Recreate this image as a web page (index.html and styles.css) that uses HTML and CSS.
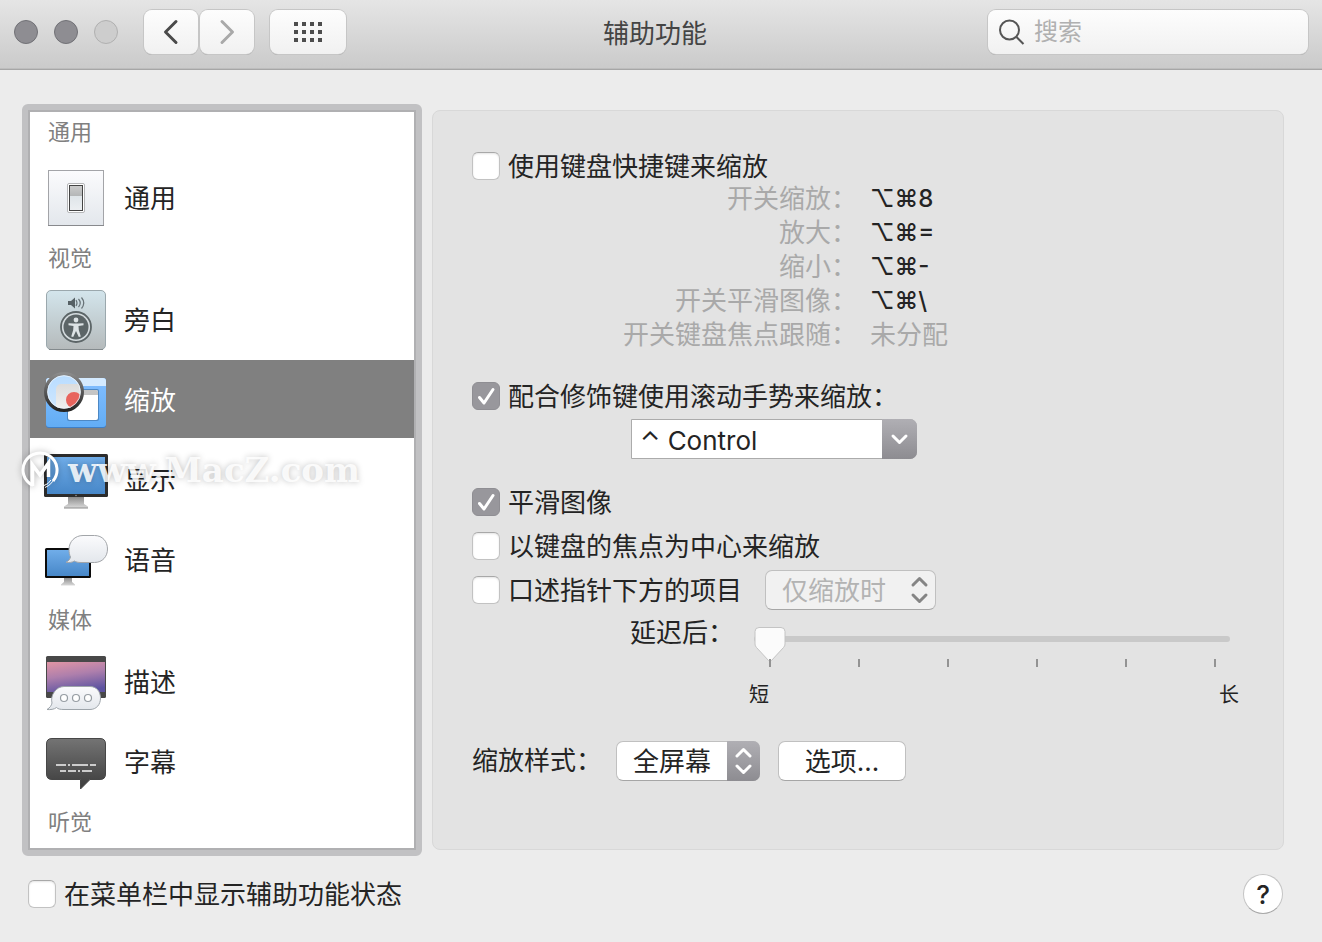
FILE: index.html
```html
<!DOCTYPE html>
<html lang="zh-CN">
<head>
  <meta charset="UTF-8">
  <meta name="viewport" content="width=device-width, initial-scale=1.0">
  <title>辅助功能</title>
  <link rel="stylesheet" href="styles.css">
</head>
<body>
  <header class="toolbar">
    <div class="window-buttons">
      <button class="light" aria-label="关闭"></button>
      <button class="light" aria-label="最小化"></button>
      <button class="light light-off" aria-label="缩放窗口" disabled></button>
    </div>
    <div class="nav-buttons">
      <button class="tool-button" aria-label="后退">
        <svg width="54" height="44" viewBox="0 0 54 44"><path d="M32 11.500L21.500 22L32 32.500" fill="none" stroke="#4a4a4a" stroke-width="3" stroke-linecap="round" stroke-linejoin="round"/></svg>
      </button>
      <button class="tool-button" aria-label="前进">
        <svg width="54" height="44" viewBox="0 0 54 44"><path d="M22 11.500L32.500 22L22 32.500" fill="none" stroke="#a9a9a9" stroke-width="3" stroke-linecap="round" stroke-linejoin="round"/></svg>
      </button>
    </div>
    <button class="tool-button grid-button" aria-label="显示全部">
      <svg width="28" height="20" viewBox="0 0 28 20" fill="#4d4d4d">
        <path d="M0 0h4v4H0zM8 0h4v4H8zM16 0h4v4h-4zM24 0h4v4h-4zM0 8h4v4H0zM8 8h4v4H8zM16 8h4v4h-4zM24 8h4v4h-4zM0 16h4v4H0zM8 16h4v4H8zM16 16h4v4h-4zM24 16h4v4h-4z"/>
      </svg>
    </button>
    <h1 class="window-title">辅助功能</h1>
    <div class="search">
      <svg width="26" height="26" viewBox="0 0 26 26" fill="none" stroke="#555" stroke-width="2"><circle cx="10.500" cy="11" r="9.500"/><path d="M17.500 18L24.500 25"/></svg>
      <input type="search" placeholder="搜索" aria-label="搜索">
    </div>
  </header>

  <main class="content">
    <div class="columns">
      <nav class="sidebar">
        <h2 class="group-title first">通用</h2>
        <a class="item" href="#general">
          <svg class="item-icon" viewBox="0 0 64 64">
            <defs>
              <linearGradient id="plate" x2="0" y2="1"><stop offset="0" stop-color="#fbfbfd"/><stop offset="1" stop-color="#e3e7ec"/></linearGradient>
              <linearGradient id="key" x2="0" y2="1"><stop offset="0" stop-color="#ccc"/><stop offset=".42" stop-color="#b4b6b7"/><stop offset=".43" stop-color="#dfe5e9"/><stop offset="1" stop-color="#eceff2"/></linearGradient>
            </defs>
            <rect x="4.500" y="5.500" width="55" height="55" fill="url(#plate)" stroke="#a3a4a8"/>
            <path d="M4 60.500h56" stroke="#88898d"/>
            <rect x="23.500" y="18.500" width="17" height="29" rx="1.500" fill="#fff" stroke="#b5b6b8"/>
            <rect x="25.500" y="20.500" width="13" height="25" fill="url(#key)" stroke="#444"/>
          </svg>
          <span>通用</span>
        </a>

        <h2 class="group-title">视觉</h2>
        <a class="item" href="#voiceover">
          <svg class="item-icon" viewBox="0 0 64 64">
            <defs><linearGradient id="vo" x2="0" y2="1"><stop offset="0" stop-color="#d3e5ec"/><stop offset="1" stop-color="#b5babb"/></linearGradient></defs>
            <rect x="2.500" y="3.500" width="59" height="59" rx="4.500" fill="url(#vo)" stroke="#9ba8ad"/>
            <path d="M5 62.500h54" stroke="#838a8d"/>
            <path d="M24 14h3l4-3.500v11L27 18h-3z" fill="#566064"/>
            <path d="M32 13q2 3 0 6M34.500 12q3.500 4 0 8M37.500 10.500q4.500 5.500 0 11" fill="none" stroke="#667176" stroke-width="1.200"/>
            <circle cx="32" cy="40" r="15" fill="#d5dcdf" stroke="#5c6567" stroke-width="1.800"/>
            <circle cx="32" cy="40" r="12.500" fill="#5c6567"/>
            <circle cx="32" cy="33" r="2.400" fill="#dde3e5"/>
            <path d="M24.500 36.200l5.500.3h4l5.500-.3v2l-5 .8.300 4 2 6.500-2 .5-2.800-6-2.800 6-2-.5 2-6.500.300-4-5-.8z" fill="#dde3e5"/>
          </svg>
          <span>旁白</span>
        </a>
        <a class="item selected" href="#zoom" aria-current="page">
          <svg class="item-icon" viewBox="0 0 64 64">
            <defs>
              <linearGradient id="desk" x2="0" y2="1"><stop offset="0" stop-color="#83beff"/><stop offset="1" stop-color="#62adf5"/></linearGradient>
              <linearGradient id="rim" x2="0" y2="1"><stop offset="0" stop-color="#8a8a8a"/><stop offset="1" stop-color="#252525"/></linearGradient>
              <linearGradient id="glass" x2="0" y2="1"><stop offset="0" stop-color="#b8dcff"/><stop offset="1" stop-color="#cfe7ff"/></linearGradient>
              <linearGradient id="page" x2="0" y2="1"><stop offset="0" stop-color="#dcdcdc"/><stop offset="1" stop-color="#f4f4f4"/></linearGradient>
              <clipPath id="lens"><circle cx="20" cy="25" r="17"/></clipPath>
            </defs>
            <rect x="2" y="11" width="60" height="50" rx="3" fill="#3e7fc7"/>
            <rect x="2" y="11" width="60" height="49" rx="3" fill="url(#desk)"/>
            <path d="M2 19v-5q0-3 3-3h54q3 0 3 3v5z" fill="#d4eaff"/>
            <rect x="23" y="22" width="32" height="32" rx="2" fill="#4d88c4"/>
            <rect x="24" y="23" width="30" height="30" rx="2" fill="#fff"/>
            <path d="M24 28v-3q0-2 2-2h26q2 0 2 2v3z" fill="#c5c5c5"/>
            <g clip-path="url(#lens)">
              <path d="M2 7h36v36H2z" fill="url(#glass)"/>
              <rect x="12" y="17" width="30" height="30" rx="5" fill="url(#page)"/>
              <circle cx="30" cy="33" r="8" fill="#e8645d"/>
            </g>
            <circle cx="20" cy="25" r="18.300" fill="none" stroke="url(#rim)" stroke-width="3.400"/>
            <circle cx="20" cy="25" r="16.400" fill="none" stroke="#eef6ff" stroke-width=".8"/>
          </svg>
          <span>缩放</span>
        </a>
        <a class="item" href="#display">
          <svg class="item-icon" viewBox="0 0 64 64">
            <defs>
              <linearGradient id="screen" x2="0" y2="1"><stop offset="0" stop-color="#70ade9"/><stop offset="1" stop-color="#4787c8"/></linearGradient>
              <linearGradient id="stand" x2="0" y2="1"><stop offset="0" stop-color="#858585"/><stop offset="1" stop-color="#d9d9d9"/></linearGradient>
            </defs>
            <path d="M24 49h16v8l4 2.500v1.500H20v-1.500l4-2.500z" fill="url(#stand)"/>
            <path d="M20 61h24" stroke="#8b8b8b"/>
            <rect x="0" y="7" width="64" height="43" rx="1.500" fill="#2c2c2c"/>
            <rect x="3" y="10" width="58" height="37" fill="url(#screen)"/>
            <circle cx="32" cy="48.500" r=".7" fill="#aaa"/>
          </svg>
          <span>显示</span>
        </a>
        <a class="item" href="#speech">
          <svg class="item-icon" viewBox="0 0 64 64">
            <path d="M20 50h8v5l3 2.500v1H17v-1l3-2.500z" fill="url(#stand)"/>
            <rect x="1" y="21" width="46" height="30" rx="1.500" fill="#0b0b0b"/>
            <rect x="3" y="23" width="42" height="26" fill="url(#screen)"/>
            <path d="M39 8.500h11.500c8 0 13 6 13 13.500s-5 13.500-13 13.500H37c-3 0-5-.5-6.500-1.500-2.500 1.500-5.500 1.800-8.500 1.300 2.500-1.300 4-3 4.500-5.300-1-2-1.500-4.500-1.500-7.500 0-8 6-14 14-14z" fill="url(#plate)" stroke="#a2a5a9"/>
          </svg>
          <span>语音</span>
        </a>

        <h2 class="group-title">媒体</h2>
        <a class="item" href="#descriptions">
          <svg class="item-icon" viewBox="0 0 64 64">
            <defs><linearGradient id="sunset" x1=".2" x2=".5" y2="1"><stop offset="0" stop-color="#dc93a5"/><stop offset=".45" stop-color="#ae7fac"/><stop offset="1" stop-color="#5d53a1"/></linearGradient></defs>
            <rect x="2" y="7" width="60" height="42" rx="1.500" fill="#484848"/>
            <rect x="3" y="13" width="58" height="30" fill="url(#sunset)"/>
            <path d="M20 37.500h26c6.500 0 10.500 5 10.500 11.500S52.500 60.500 46 60.500H20c-4 0-6-.5-7.500-2-2.500 2-6 2.300-9.500 2 3-1.800 4.500-4 5-6.500-2-7.500 4-16.500 12-16.500z" fill="url(#plate)" stroke="#9da4aa"/>
            <g fill="#fff" stroke="#969da3" stroke-width="1.200"><circle cx="20" cy="49" r="3.500"/><circle cx="32" cy="49" r="3.500"/><circle cx="44" cy="49" r="3.500"/></g>
          </svg>
          <span>描述</span>
        </a>
        <a class="item" href="#captions">
          <svg class="item-icon" viewBox="0 0 64 64">
            <defs><linearGradient id="caption" x2="0" y2="1"><stop offset="0" stop-color="#747474"/><stop offset="1" stop-color="#3c3c3c"/></linearGradient></defs>
            <path d="M8 9.500h48q5.500 0 5.500 5.500v30q0 5.500-5.500 5.500H46L36.500 60V50.500H8q-5.500 0-5.500-5.500V15q0-5.500 5.500-5.500z" fill="url(#caption)" stroke="#474747"/>
            <path d="M12 36h10M24 36h2M28 36h16M46 36h6M16 42h6M24 42h8M34 42h2M38 42h10" stroke="#ccc" stroke-width="2"/>
          </svg>
          <span>字幕</span>
        </a>
        <h2 class="group-title">听觉</h2>

        <div class="watermark">
          <svg width="40" height="40" viewBox="0 0 40 40" fill="none" stroke="#fff">
            <path d="M13 35.500A17 17 0 1 1 33 31" stroke-width="3"/>
            <path d="M12.500 36V15L20 25L28.500 13V27" stroke-width="3.500"/>
            <path d="M23 36q6-2 8-6M25 37.500q7-3 9-9" stroke-width="1"/>
          </svg>
          <span>www.MacZ.com</span>
        </div>
      </nav>

      <section class="panel">
        <label class="check-row">
          <input type="checkbox" class="check">
          <span>使用键盘快捷键来缩放</span>
        </label>
        <dl class="shortcuts">
          <dt>开关缩放：</dt><dd>⌥⌘8</dd>
          <dt>放大：</dt><dd>⌥⌘=</dd>
          <dt>缩小：</dt><dd>⌥⌘-</dd>
          <dt>开关平滑图像：</dt><dd>⌥⌘\</dd>
          <dt>开关键盘焦点跟随：</dt><dd class="unset">未分配</dd>
        </dl>

        <label class="check-row gesture-row">
          <input type="checkbox" class="check" checked>
          <span>配合修饰键使用滚动手势来缩放：</span>
        </label>
        <div class="dropdown modifier">
          <select aria-label="修饰键"><option>⌃ Control</option></select>
          <svg width="35" height="40" viewBox="0 0 35 40"><path d="M11 17l6.500 6.500L24 17" fill="none" stroke="#fff" stroke-width="3" stroke-linecap="round" stroke-linejoin="round"/></svg>
        </div>

        <div class="options">
          <label class="check-row">
            <input type="checkbox" class="check" checked>
            <span>平滑图像</span>
          </label>
          <label class="check-row">
            <input type="checkbox" class="check">
            <span>以键盘的焦点为中心来缩放</span>
          </label>
        </div>
        <div class="speak-row">
          <label class="check-row">
            <input type="checkbox" class="check">
            <span>口述指针下方的项目</span>
          </label>
          <div class="dropdown speak-when">
            <select aria-label="口述时机" disabled><option>仅缩放时</option></select>
            <svg width="32" height="40" viewBox="0 0 32 40"><path d="M9 15l6.500-6.500L22 15M9 25l6.500 6.500L22 25" fill="none" stroke="#858585" stroke-width="3" stroke-linecap="round" stroke-linejoin="round"/></svg>
          </div>
        </div>

        <div class="delay-row">
          <label for="delay">延迟后：</label>
          <div class="slider">
            <input type="range" id="delay" min="0" max="5" value="0">
            <div class="ticks"><i></i><i></i><i></i><i></i><i></i><i></i></div>
            <div class="slider-labels"><span>短</span><span>长</span></div>
          </div>
        </div>

        <div class="style-row">
          <label for="zoom-style">缩放样式：</label>
          <div class="dropdown zoom-style">
            <select id="zoom-style"><option>全屏幕</option></select>
            <svg width="33" height="40" viewBox="0 0 33 40"><path d="M10 15l6.500-6.500L23 15M10 25l6.500 6.500L23 25" fill="none" stroke="#fff" stroke-width="3" stroke-linecap="round" stroke-linejoin="round"/></svg>
          </div>
          <button class="push-button">选项...</button>
        </div>
      </section>
    </div>

    <footer class="footer">
      <label class="check-row">
        <input type="checkbox" class="check">
        <span>在菜单栏中显示辅助功能状态</span>
      </label>
      <button class="help-button" aria-label="帮助">?</button>
    </footer>
  </main>
</body>
</html>
```
FILE: styles.css
```css
* {
  box-sizing: border-box;
}

body {
  margin: 0;
  min-height: 100vh;
  background-color: #ececec;
  color: #242424;
  font-family: Inter, "Noto Sans CJK SC", sans-serif;
  font-size: 26px;
  line-height: 32px;
}

button,
input,
select {
  margin: 0;
  font: inherit;
  color: inherit;
}

h1,
h2,
dl,
dd {
  margin: 0;
  font-weight: normal;
}

svg {
  display: block;
}

/* Toolbar */

.toolbar {
  display: flex;
  align-items: center;
  height: 70px;
  padding: 0 14px 5px;
  background: linear-gradient(#e5e5e5, #cacaca);
  border-bottom: 1px solid #a6a6a6;
  box-shadow: inset 0 -1px 0 #bdbdbd;
}

.window-buttons {
  display: flex;
  gap: 16px;
  margin-right: 26px;
}

.light {
  width: 24px;
  height: 24px;
  padding: 0;
  border: 1px solid #717176;
  border-radius: 50%;
  background-color: #8e8d92;
}

.light-off {
  border-color: #b0b0b0;
  background-color: #cdcdcd;
}

.nav-buttons {
  display: flex;
  gap: 2px;
  margin-right: 16px;
}

.tool-button {
  display: flex;
  align-items: center;
  justify-content: center;
  width: 54px;
  height: 44px;
  padding: 0;
  border: none;
  border-radius: 8px;
  background: linear-gradient(#fdfdfd, #f1f1f1);
  box-shadow: 0 0 0 1px #c6c6c6, 0 1px 0 0 #a0a0a0;
}

.grid-button {
  width: 76px;
}

.window-title {
  flex: 1;
  padding: 4px 24px 0 0;
  font-size: 26px;
  color: #444;
  text-align: center;
}

.search {
  display: flex;
  align-items: center;
  gap: 9px;
  width: 320px;
  height: 44px;
  padding: 0 11px;
  border-radius: 8px;
  background: linear-gradient(#fdfdfd, #f1f1f1);
  box-shadow: 0 0 0 1px #c6c6c6, 0 1px 0 0 #a0a0a0;
}

.search svg {
  flex: none;
}

.search input {
  flex: 1;
  min-width: 0;
  padding: 0;
  border: none;
  outline: none;
  background: none;
  font-size: 24px;
}

.search input::placeholder {
  color: #b0b0b0;
}

/* Layout */

.content {
  padding: 34px 38px 28px 22px;
}

.columns {
  display: flex;
  gap: 10px;
}

/* Sidebar */

.sidebar {
  position: relative;
  flex: none;
  width: 400px;
  padding: 2px 2px 6px;
  border: 6px solid #c1c1c3;
  border-radius: 6px;
  background-color: #fff;
  box-shadow: inset 0 0 0 2px #b0b0b2;
}

.group-title {
  height: 42px;
  padding-left: 18px;
  font-size: 22px;
  line-height: 40px;
  color: #808080;
}

.group-title.first {
  height: 46px;
}

.item {
  display: flex;
  align-items: center;
  gap: 16px;
  height: 78px;
  margin-bottom: 2px;
  padding-left: 14px;
  color: #242424;
  text-decoration: none;
}

.item span {
  padding-top: 4px;
}

.item.selected {
  background-color: #808080;
  color: #fff;
}

.item-icon {
  width: 64px;
  height: 64px;
}

.watermark {
  position: absolute;
  top: 340px;
  left: -8px;
  display: flex;
  align-items: center;
  gap: 8px;
  color: rgba(255, 255, 255, 0.85);
  font-family: "DejaVu Serif", serif;
  font-size: 34px;
  font-weight: bold;
  line-height: 40px;
  text-shadow: 0 0 6px rgba(0, 0, 0, 0.25);
  pointer-events: none;
}

.watermark svg {
  filter: drop-shadow(0 0 3px rgba(0, 0, 0, 0.3));
}

/* Settings panel */

.panel {
  flex: 1;
  margin: 6px 0;
  padding: 39px 44px 39px 39px;
  border: 1px solid #d8d8d8;
  border-radius: 8px;
  background-color: #e3e3e3;
}

.check-row {
  display: flex;
  align-items: center;
  gap: 8px;
}

.check-row span {
  padding-top: 2px;
  line-height: 30px;
}

.check {
  appearance: none;
  flex: none;
  width: 28px;
  height: 28px;
  border: 1px solid #c2c2c2;
  border-top-color: #a8a8a8;
  border-radius: 6px;
  background-color: #fff;
  box-shadow: inset 0 1px 2px #e4e4e4;
}

.check:checked {
  border-color: #8f8e93;
  background: #98979c url("data:image/svg+xml,%3Csvg xmlns='http://www.w3.org/2000/svg' viewBox='0 0 26 26'%3E%3Cpath d='M6.500 14.500L11 20L20 6.500' fill='none' stroke='white' stroke-width='3' stroke-linecap='round' stroke-linejoin='round'/%3E%3C/svg%3E") center / 26px 26px no-repeat;
  box-shadow: none;
}

.shortcuts {
  display: grid;
  grid-template-columns: 385px 1fr;
  column-gap: 13px;
  line-height: 34px;
}

.shortcuts dt {
  color: #a9a9a9;
  text-align: right;
}

.shortcuts dd {
  font-size: 24px;
  font-weight: 500;
}

.shortcuts .unset {
  color: #a9a9a9;
  font-size: 26px;
  font-weight: normal;
}

.gesture-row {
  margin-top: 28px;
}

.dropdown {
  position: relative;
}

.dropdown select {
  appearance: none;
  display: block;
  width: 100%;
  height: 40px;
  padding: 2px 16px 0;
  border: 1px solid #c0c0c0;
  border-bottom-color: #a6a6a6;
  border-radius: 7px;
  background-color: #fff;
  opacity: 1;
}

.dropdown svg {
  position: absolute;
  top: 0;
  right: 0;
  border-radius: 0 7px 7px 0;
  background: linear-gradient(#b0afb4, #8d8c91);
  pointer-events: none;
}

.modifier {
  width: 286px;
  margin: 7px 0 27px 159px;
}

.modifier select {
  padding: 4px 8px 0;
  border-color: #ababab;
  border-radius: 0 7px 7px 0;
}

.options {
  display: flex;
  flex-direction: column;
  gap: 12px;
  margin-bottom: 8px;
}

.speak-row {
  display: flex;
  align-items: center;
  gap: 23px;
}

.speak-when {
  width: 171px;
}

.speak-when select {
  background-color: #f1f1f1;
  color: #b3b3b3;
}

.speak-when svg {
  background: none;
}

.delay-row {
  display: flex;
  gap: 15px;
  margin-top: 6px;
  padding-left: 158px;
  line-height: 34px;
}

.slider {
  flex: 1;
  padding-top: 11px;
}

.slider input {
  appearance: none;
  display: block;
  width: calc(100% - 14px);
  height: 24px;
  margin-left: 5px;
  background: none;
}

.slider input::-webkit-slider-runnable-track {
  height: 6px;
  border-radius: 3px;
  background-color: #c9c9c9;
}

.slider input::-webkit-slider-thumb {
  appearance: none;
  width: 32px;
  height: 37px;
  margin-top: -10px;
  background: url("data:image/svg+xml,%3Csvg xmlns='http://www.w3.org/2000/svg' viewBox='0 0 32 37'%3E%3Cpath d='M5 1.500h22q4 0 4 4V18q0 2-1.500 3.500L17.500 34.500q-1.500 1.500-3 0L2.500 21.500Q1 20 1 18V5.500q0-4 4-4z' fill='%23fbfbfb' stroke='%23c4c4c4'/%3E%3C/svg%3E") no-repeat;
}

.ticks {
  display: flex;
  justify-content: space-between;
  margin: 8px 23px 16px 20px;
}

.ticks i {
  width: 2px;
  height: 8px;
  background-color: #939393;
}

.slider-labels {
  display: flex;
  justify-content: space-between;
  font-size: 20px;
  line-height: 24px;
}

.style-row {
  display: flex;
  align-items: center;
  margin-top: 34px;
}

.zoom-style {
  width: 144px;
  margin: 0 18px 0 14px;
}

.push-button {
  width: 128px;
  height: 40px;
  padding: 2px 0 0;
  border: 1px solid #c0c0c0;
  border-bottom-color: #a6a6a6;
  border-radius: 7px;
  background-color: #fff;
}

/* Footer */

.footer {
  display: flex;
  align-items: center;
  justify-content: space-between;
  margin-top: 18px;
  padding: 0 1px 0 6px;
}

.help-button {
  width: 40px;
  height: 40px;
  padding: 2px 0 0;
  border: 1px solid #c4c4c4;
  border-bottom-color: #a8a8a8;
  border-radius: 50%;
  background-color: #fff;
  font-weight: 500;
}
```
